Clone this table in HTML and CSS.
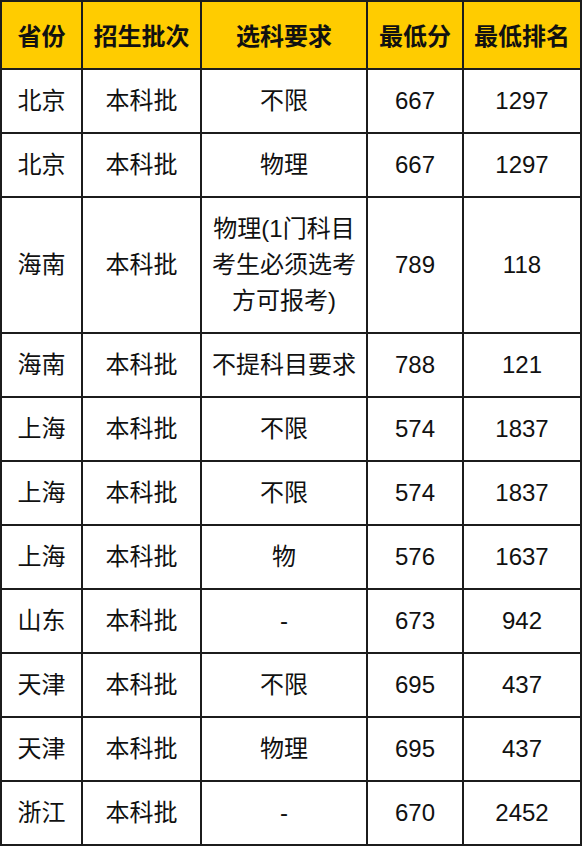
FILE: index.html
```html
<!DOCTYPE html>
<html lang="zh">
<head>
<meta charset="utf-8">
<link rel="stylesheet" href="styles.css">
</head>
<body>
<table class="score-table">
  <colgroup>
    <col class="c1"><col class="c2"><col class="c3"><col class="c4"><col class="c5">
  </colgroup>
  <thead>
    <tr><th>省份</th><th>招生批次</th><th>选科要求</th><th>最低分</th><th>最低排名</th></tr>
  </thead>
  <tbody>
    <tr><td>北京</td><td>本科批</td><td>不限</td><td>667</td><td>1297</td></tr>
    <tr><td>北京</td><td>本科批</td><td>物理</td><td>667</td><td>1297</td></tr>
    <tr><td>海南</td><td>本科批</td><td>物理(1门科目<br>考生必须选考<br>方可报考)</td><td>789</td><td>118</td></tr>
    <tr><td>海南</td><td>本科批</td><td>不提科目要求</td><td>788</td><td>121</td></tr>
    <tr><td>上海</td><td>本科批</td><td>不限</td><td>574</td><td>1837</td></tr>
    <tr><td>上海</td><td>本科批</td><td>不限</td><td>574</td><td>1837</td></tr>
    <tr><td>上海</td><td>本科批</td><td>物</td><td>576</td><td>1637</td></tr>
    <tr><td>山东</td><td>本科批</td><td>-</td><td>673</td><td>942</td></tr>
    <tr><td>天津</td><td>本科批</td><td>不限</td><td>695</td><td>437</td></tr>
    <tr><td>天津</td><td>本科批</td><td>物理</td><td>695</td><td>437</td></tr>
    <tr><td>浙江</td><td>本科批</td><td>-</td><td>670</td><td>2452</td></tr>
  </tbody>
</table>
</body>
</html>
```

FILE: styles.css
```css
html, body {
  margin: 0;
  padding: 0;
  background: #ffffff;
}

.score-table {
  border-collapse: collapse;
  table-layout: fixed;
  width: 580px;
  font-family: "Liberation Sans", "Noto Sans CJK SC", sans-serif;
  font-size: 24px;
  color: #111111;
}

.c1 { width: 81px; }
.c2 { width: 119px; }
.c3 { width: 166px; }
.c4 { width: 96px; }
.c5 { width: 118px; }

.score-table th,
.score-table td {
  border: 2px solid #1c1c1c;
  text-align: center;
  vertical-align: middle;
  padding: 13px 0;
  line-height: 36px;
  white-space: nowrap;
}

.score-table th {
  background: #ffcc00;
  font-weight: 700;
  padding: 15px 0;
  font-family: "Noto Sans CJK SC", sans-serif;
}
```
